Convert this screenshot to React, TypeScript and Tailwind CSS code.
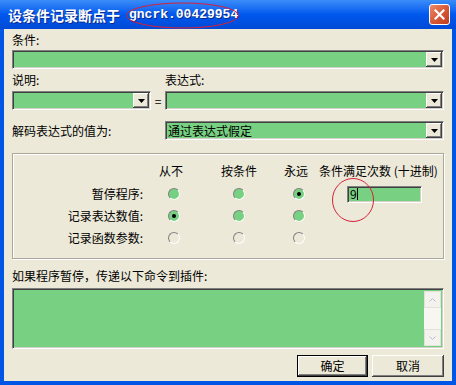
import React from "react";

const font = { fontFamily: '"Noto Sans CJK SC", "Liberation Sans", sans-serif' };
const mono = { fontFamily: '"Liberation Mono", "DejaVu Sans Mono", monospace' };

const sunken =
  "border border-t-[#808080] border-l-[#808080] border-b-white border-r-white shadow-[inset_1px_1px_0_#404040,inset_-1px_-1px_0_#d4d0c8]";
const raised =
  "bg-[#ece9d8] shadow-[inset_-1px_-1px_0_#404040,inset_1px_1px_0_#ffffff,inset_-2px_-2px_0_#808080]";

function DropButton() {
  return (
    <div className={`${raised} w-[16px] h-[15px] flex items-center justify-center shrink-0`}>
      <svg width="7" height="4" viewBox="0 0 7 4">
        <path d="M0 0h7L3.5 4z" fill="#000" />
      </svg>
    </div>
  );
}

function Combo({ className, text }: { className: string; text?: string }) {
  return (
    <div className={`${sunken} bg-[#78d182] h-[19px] flex items-center pl-[2px] pr-[1px] ${className}`}>
      <div className="flex-1 text-[12px] leading-none text-black">{text}</div>
      <DropButton />
    </div>
  );
}

function Radio({ green, checked }: { green?: boolean; checked?: boolean }) {
  return (
    <div
      className={`w-[12px] h-[12px] rounded-full border border-t-[#808080] border-l-[#808080] border-b-white border-r-white flex items-center justify-center ${
        green ? "bg-[#78d182]" : "bg-[#ece9d8]"
      }`}
    >
      {checked && <div className="w-[4px] h-[4px] rounded-full bg-black" />}
    </div>
  );
}

const rows = [
  { label: "暂停程序:", green: true, checked: 2 },
  { label: "记录表达数值:", green: true, checked: 0 },
  { label: "记录函数参数:", green: false, checked: -1 },
];

export default function App() {
  return (
    <div className="w-[456px] h-[385px] flex flex-col bg-[#0055e5] overflow-hidden" style={font}>
      {/* title bar */}
      <div className="relative h-[29px] shrink-0 flex items-center pl-[8px] pr-[6px] bg-gradient-to-b from-[#3a8cf8] via-[#0058ee] to-[#0049d6]">
        <span className="text-white font-bold text-[14px] leading-none [text-shadow:1px_1px_0_#0a2a8a]">
          设条件记录断点于
        </span>
        <span className="ml-[9px] text-white font-bold text-[13px] leading-none [text-shadow:1px_1px_0_#0a2a8a]" style={mono}>
          gncrk.00429954
        </span>
        <svg className="absolute left-[125px] top-[2px]" width="115" height="27" viewBox="0 0 115 27">
          <ellipse cx="57.5" cy="13.5" rx="56" ry="12.5" fill="none" stroke="#d8203a" strokeWidth="1" />
        </svg>
        <div className="ml-auto w-[21px] h-[21px] rounded-[3px] border border-white bg-gradient-to-br from-[#ec8a6c] via-[#d95a36] to-[#c03a1c] flex items-center justify-center">
          <svg width="11" height="11" viewBox="0 0 11 11">
            <path d="M1.5 1.5l8 8M9.5 1.5l-8 8" stroke="#fff" strokeWidth="2.2" strokeLinecap="square" />
          </svg>
        </div>
      </div>

      {/* body */}
      <div className="flex-1 mx-[4px] mb-[4px] bg-[#ece9d8] px-[8px] flex flex-col text-[12px] text-black">
        <div className="mt-[4px] h-[14px] leading-[14px]">条件:</div>
        <Combo className="mt-[3px]" />

        <div className="mt-[4px] h-[14px] leading-[14px] flex">
          <span className="w-[153px]">说明:</span>
          <span>表达式:</span>
        </div>
        <div className="mt-[4px] flex items-center">
          <Combo className="w-[139px]" />
          <span className="w-[14px] text-center">=</span>
          <Combo className="flex-1" />
        </div>

        <div className="mt-[11px] flex items-center">
          <span className="w-[153px]">解码表达式的值为:</span>
          <Combo className="flex-1" text="通过表达式假定" />
        </div>

        {/* group */}
        <div className="relative mt-[13px] h-[106px] border border-[#aca899] shadow-[inset_1px_1px_0_#fff,1px_1px_0_#fff] flex flex-col">
          <div className="mt-[10px] h-[14px] leading-[14px] flex">
            <span className="w-[131px]" />
            <span className="w-[60px] text-center pr-[6px]">从不</span>
            <span className="w-[70px] text-center">按条件</span>
            <span className="w-[44px] text-center">永远</span>
            <span className="pl-[1px] whitespace-pre">条件满足次数 (十进制)</span>
          </div>
          <div className="mt-[5px] flex flex-col">
            {rows.map((r, i) => (
              <div key={r.label} className="h-[22px] flex items-center">
                <span className="w-[131px] text-right pr-[1px]">{r.label}</span>
                <span className="w-[60px] flex justify-center">
                  <Radio green={r.green} checked={r.checked === 0} />
                </span>
                <span className="w-[70px] flex justify-center">
                  <Radio green={r.green} checked={r.checked === 1} />
                </span>
                <span className="w-[44px] flex justify-center pl-[6px]">
                  <Radio green={r.green} checked={r.checked === 2} />
                </span>
                {i === 0 && (
                  <div className={`${sunken} ml-[29px] w-[75px] h-[17px] bg-[#78d182] flex items-center pl-[2px] leading-none`}>
                    <span>9</span>
                    <span className="w-[1px] h-[12px] bg-black" />
                  </div>
                )}
              </div>
            ))}
          </div>
          <svg className="absolute left-[318px] top-[23px]" width="44" height="46" viewBox="0 0 44 46">
            <ellipse cx="22" cy="23" rx="20.5" ry="21.5" fill="none" stroke="#d8203a" strokeWidth="1" />
          </svg>
        </div>

        <div className="mt-[10px] h-[14px] leading-[14px]">如果程序暂停，传递以下命令到插件:</div>
        <div className={`${sunken} mt-[5px] h-[61px] bg-[#78d182] flex justify-end p-[2px]`}>
          <div className="w-[17px] h-full bg-[#f7f6f1] flex flex-col justify-between">
            <div className="h-[17px] border border-[#e2e1da] bg-[#f3f2ec] flex items-center justify-center">
              <svg width="7" height="4" viewBox="0 0 7 4">
                <path d="M0.5 3.5L3.5 0.5L6.5 3.5" stroke="#b5bdd3" fill="none" />
              </svg>
            </div>
            <div className="h-[17px] border border-[#e2e1da] bg-[#f3f2ec] flex items-center justify-center">
              <svg width="7" height="4" viewBox="0 0 7 4">
                <path d="M0.5 0.5L3.5 3.5L6.5 0.5" stroke="#b5bdd3" fill="none" />
              </svg>
            </div>
          </div>
        </div>

        <div className="mt-[6px] flex justify-end gap-[4px]">
          <div className="w-[71px] h-[22px] border border-black">
            <div className={`${raised} w-full h-full flex items-center justify-center`}>确定</div>
          </div>
          <div className={`${raised} w-[72px] h-[22px] flex items-center justify-center`}>取消</div>
        </div>
      </div>
    </div>
  );
}
